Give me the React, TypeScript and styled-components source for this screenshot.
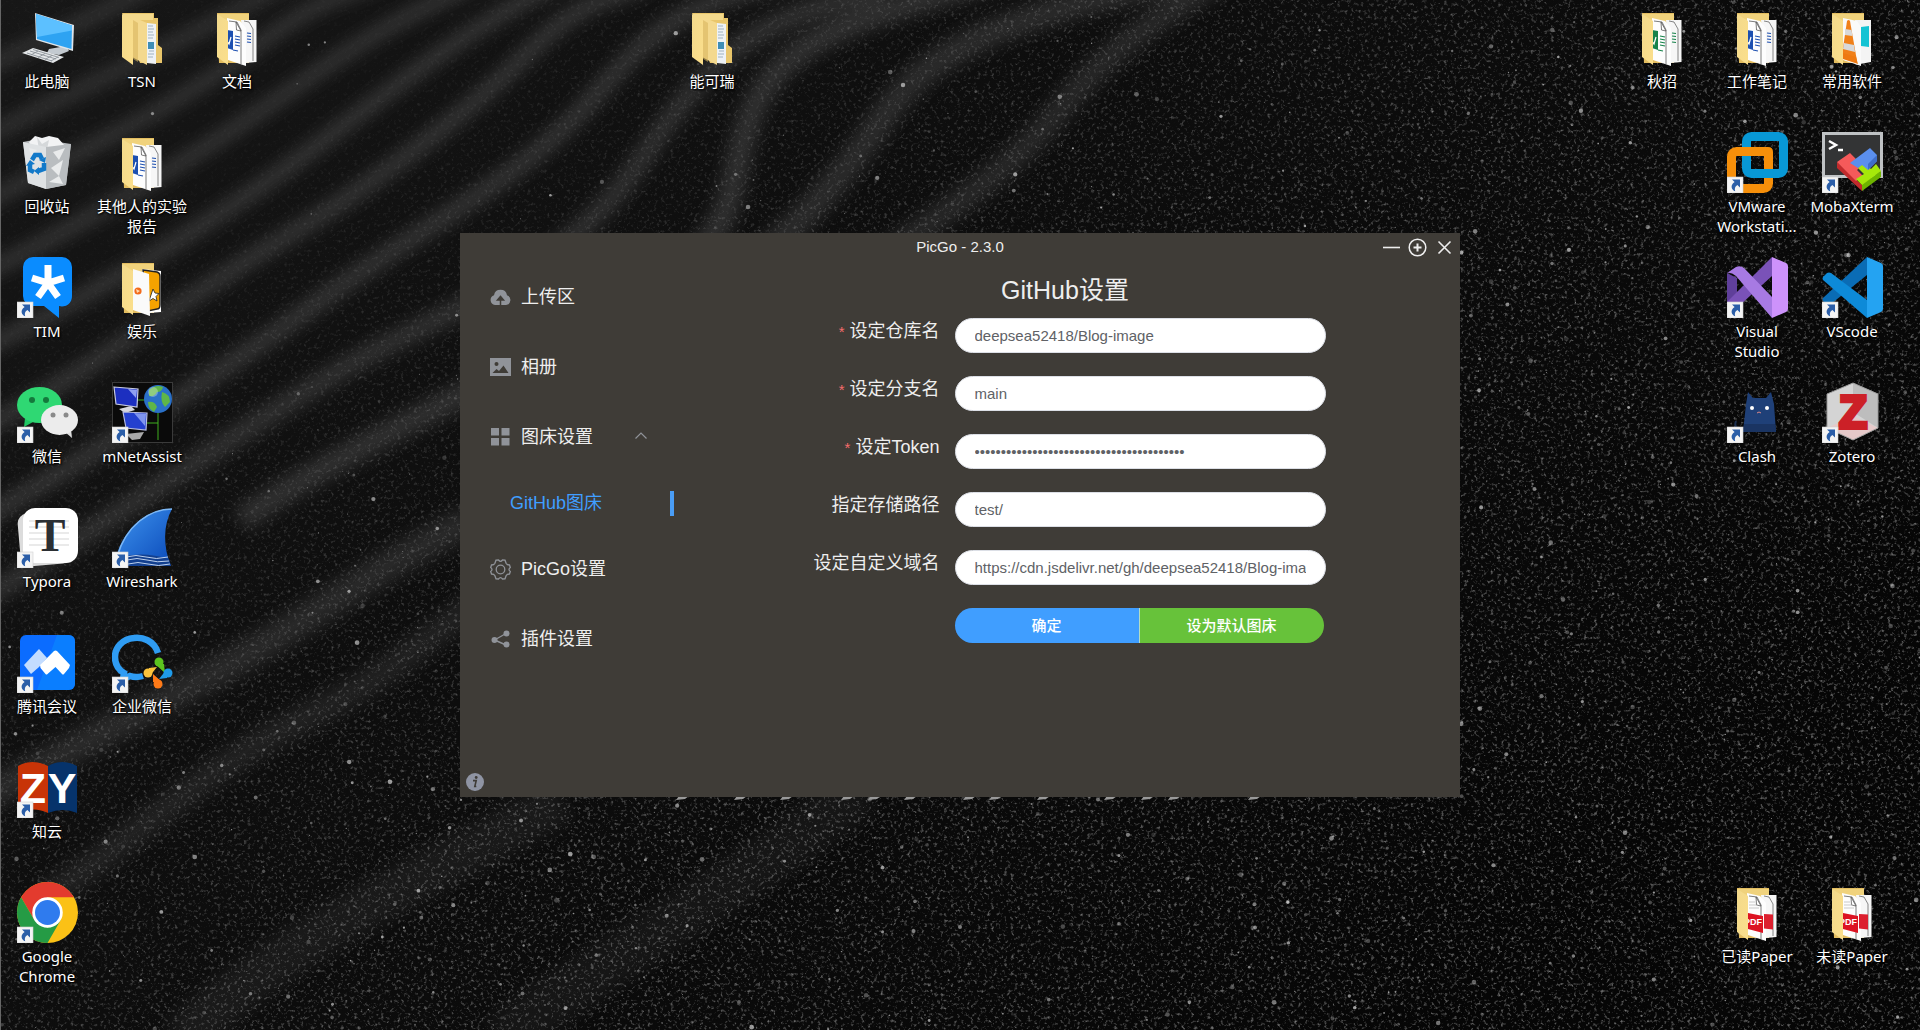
import React from 'react';
import styled, { createGlobalStyle } from 'styled-components';

const GlobalStyle = createGlobalStyle`
  *, *::before, *::after { box-sizing: border-box; }
  html, body { margin: 0; background: #0a0a0a; }
  body { overflow: hidden; }
  button, input { font: inherit; color: inherit; margin: 0; }
`;

const uiFont = '"Liberation Sans", "Noto Sans CJK SC", sans-serif';
const deskFont = '"Noto Sans", "Noto Sans CJK SC", sans-serif';

/* ---------- Desktop ---------- */

const Desktop = styled.main`
  position: relative;
  min-height: 100vh;
  overflow: hidden;
  background: #0a0a0a;
  box-shadow: inset 1px 0 0 #666;
`;

const WallpaperSvg = styled.svg`
  position: absolute;
  inset: 0 0 0 1px;
  width: 100%;
  height: 100%;
`;

const IconGrid = styled.div`
  position: relative;
  display: grid;
  grid-template-columns: repeat(auto-fill, 95px);
  grid-auto-rows: 125px;
`;

const Shortcut = styled.button<{ $col: number; $row: number }>`
  grid-column: ${(p) => p.$col};
  grid-row: ${(p) => p.$row};
  display: flex;
  flex-direction: column;
  align-items: center;
  gap: 3px;
  padding: 7px 1px 0 0;
  border: 0;
  background: none;
  font-family: ${deskFont};
`;

const IconSvg = styled.svg`
  display: block;
  flex: none;
  width: 61px;
  height: 61px;
`;

const ShortcutLabel = styled.span`
  width: 92px;
  display: flex;
  flex-direction: column;
  align-items: center;
  white-space: nowrap;
  font-size: 15px;
  line-height: 20px;
  color: #fff;
  text-shadow: 1px 1px 2px #000, 0 1px 3px #000;
`;

/* ---------- Application window ---------- */

const AppWindow = styled.section`
  position: absolute;
  top: 233px;
  left: 50%;
  width: min(1000px, 100%);
  min-height: 564px;
  transform: translateX(-50%);
  display: flex;
  flex-direction: column;
  background: #3f3c37;
  color: #eee;
  font-family: ${uiFont};
`;

const TitleBar = styled.header`
  display: grid;
  grid-template-columns: 1fr auto 1fr;
  align-items: center;
  height: 28px;
  padding: 0 6px;
  font-size: 15px;
  line-height: 20px;
`;

const TitleText = styled.h1`
  grid-column: 2;
  margin: 0;
  font-size: 15px;
  font-weight: 400;
`;

const WindowControls = styled.div`
  display: flex;
  justify-content: flex-end;
  gap: 8px;
`;

const ControlButton = styled.button`
  display: flex;
  padding: 0;
  border: 0;
  background: none;
`;

const Body = styled.div`
  flex: 1;
  display: flex;
`;

const Sidebar = styled.nav`
  width: 214px;
  padding-top: 1px;
  display: flex;
  flex-direction: column;
`;

const MenuItem = styled.a`
  display: flex;
  align-items: center;
  gap: 10px;
  height: 70px;
  padding-left: 30px;
  padding-right: 27px;
  color: #eee;
  font-size: 18px;
  line-height: 24px;
  text-decoration: none;
`;

const MenuText = styled.span`
  flex: 1;
`;

const SubMenuItem = styled.a`
  display: flex;
  align-items: center;
  justify-content: space-between;
  height: 62px;
  padding-left: 50px;
  color: #409eff;
  font-size: 18px;
  line-height: 24px;
  text-decoration: none;

  &::after {
    content: '';
    width: 4px;
    height: 25px;
    background: #4a9df5;
  }
`;

const InfoButton = styled.button`
  display: flex;
  align-self: flex-start;
  margin: auto 0 6px 6px;
  padding: 0;
  border: 0;
  background: none;
`;

const Content = styled.div`
  flex: 1;
  display: flex;
  flex-direction: column;
  align-items: center;
  gap: 11px;
  padding: 13px 4px 0 0;
`;

const Heading = styled.h2`
  margin: 0;
  font-size: 25px;
  line-height: 33px;
  font-weight: 400;
`;

const Form = styled.form`
  width: min(521px, 100%);
  display: flex;
  flex-direction: column;
  gap: 23px;
`;

const Field = styled.div`
  display: grid;
  grid-template-columns: 150px 1fr;
  align-items: start;
`;

const FieldLabel = styled.label<{ $required?: boolean }>`
  padding-right: 15px;
  text-align: right;
  white-space: nowrap;
  font-size: 18px;
  line-height: 26px;

  &::before {
    content: ${(p) => (p.$required ? "'*'" : 'none')};
    margin-right: 5px;
    color: #f56c6c;
    font-size: 15px;
  }
`;

const TextInput = styled.input`
  width: 100%;
  height: 35px;
  padding: 0 19px;
  border: 1px solid #dcdfe6;
  border-radius: 18px;
  background: #fff;
  color: #606266;
  font-size: 15px;
  outline: none;
`;

const Actions = styled.div`
  grid-column: 2;
  display: flex;
  padding-right: 2px;
`;

const ActionButton = styled.button<{ $tone: string }>`
  flex: 1;
  height: 35px;
  padding: 0;
  border: 0;
  background: ${(p) => p.$tone};
  color: #fff;
  font-size: 15px;
  font-weight: 500;
  line-height: 20px;

  &:first-child {
    border-radius: 18px 0 0 18px;
    border-right: 1px solid #b3dcc4;
  }
  &:last-child {
    border-radius: 0 18px 18px 0;
  }
`;

/* ---------- Wallpaper ---------- */

const ridges: [string, number, number][] = [
  ['M-20 70 C60 30 110 10 160 -20', 14, 0.5],
  ['M-20 140 C60 95 150 60 290 -20', 14, 0.5],
  ['M-20 205 C80 150 170 110 250 50 S340 0 380 -20', 14, 0.55],
  ['M-20 275 C80 225 190 160 290 90 S420 10 480 -20', 15, 0.55],
  ['M-20 350 C100 290 210 225 310 150 S450 40 560 -20', 16, 0.55],
  ['M-20 430 C90 370 180 300 280 240 S470 110 530 50 S620 0 650 -20', 17, 0.55],
  ['M-20 520 C100 450 210 380 320 300 S520 180 590 100 S680 10 780 -20', 18, 0.55],
  ['M-20 600 C110 520 240 430 340 370 S560 280 640 160 S760 20 880 -10', 20, 0.5],
  ['M240 520 C340 450 460 400 600 320 S720 220 745 130 S850 20 990 -20', 24, 0.5],
  ['M700 300 C780 250 840 180 880 120 S980 20 1180 -20', 26, 0.45],
  ['M820 300 C930 220 1000 180 1050 120 S1120 40 1220 -20', 24, 0.4],
  ['M-20 800 C80 740 190 690 270 640 S390 560 470 520', 30, 0.4],
  ['M40 900 C120 850 200 770 300 720 S420 640 480 600', 26, 0.3],
  ['M180 1040 C280 940 420 880 560 800', 44, 0.2],
  ['M500 1040 C600 960 720 900 860 790', 50, 0.16],
];

const makeSpecks = (count: number) => {
  let seed = 20231;
  const next = () => {
    seed = (seed * 16807) % 2147483647;
    return seed / 2147483647;
  };
  const out: { x: number; y: number; r: number; o: number }[] = [];
  while (out.length < count) {
    const x = next() * 1920;
    const y = next() * 1030;
    const density = Math.min(1, Math.max(0.03, (x + y * 1.3 - 650) / 1100));
    if (next() < density) {
      out.push({ x, y, r: 0.5 + Math.pow(next(), 4) * 1.9, o: 0.15 + next() * 0.55 });
    }
  }
  return out;
};

const specks = makeSpecks(2800);

const strokesUnderWindow = [680, 738, 784, 845, 872, 908, 967, 993, 1041, 1108, 1145, 1172, 1252];

const Wallpaper = () => (
  <WallpaperSvg viewBox="0 0 1920 1030" preserveAspectRatio="xMidYMid slice" aria-hidden="true">
    <defs>
      <linearGradient id="base" x1="0" y1="0" x2="1" y2="0.6">
        <stop offset="0" stopColor="#171717" />
        <stop offset="0.4" stopColor="#0e0e0e" />
        <stop offset="1" stopColor="#060606" />
      </linearGradient>
      <linearGradient id="grainFade" x1="0" y1="0" x2="1" y2="0.7">
        <stop offset="0.15" stopColor="#fff" stopOpacity="0.06" />
        <stop offset="0.6" stopColor="#fff" stopOpacity="0.6" />
        <stop offset="1" stopColor="#fff" stopOpacity="0.7" />
      </linearGradient>
      <mask id="grainMask">
        <rect width="1920" height="1030" fill="url(#grainFade)" />
      </mask>
      <filter id="soft" x="-20%" y="-20%" width="140%" height="140%">
        <feGaussianBlur stdDeviation="8" />
      </filter>
      <filter id="grain" x="0" y="0" width="100%" height="100%">
        <feTurbulence type="fractalNoise" baseFrequency="0.3" numOctaves="3" seed="7" />
        <feColorMatrix values="0 0 0 0 0.7  0 0 0 0 0.7  0 0 0 0 0.7  2.2 0 0 0 -1.2" />
      </filter>
    </defs>
    <rect width="1920" height="1030" fill="url(#base)" />
    <g fill="none" stroke="#505050" filter="url(#soft)">
      {ridges.map(([d, w, o]) => (
        <path key={d} d={d} strokeWidth={w} strokeOpacity={o} />
      ))}
    </g>
    <rect width="1920" height="1030" filter="url(#grain)" mask="url(#grainMask)" />
    <g fill="#ddd">
      {specks.map((s, i) => (
        <circle key={i} cx={s.x} cy={s.y} r={s.r} opacity={s.o} />
      ))}
    </g>
    <g fill="#999">
      {strokesUnderWindow.map((x) => (
        <path key={x} d={`M${x - 5} 800 l3 -4 h10 l-4 3 z`} />
      ))}
    </g>
  </WallpaperSvg>
);

/* ---------- Desktop icons ---------- */

const ArrowBadge = () => (
  <g>
    <rect x="0" y="45" width="16" height="16" fill="#f4f4f4" stroke="#cfcfcf" strokeWidth="0.6" />
    <path d="M5 47.5h8v8l-2.6-2.6c-2.6 1.6-3 3.6-2.2 6.3-3.6-1.4-5.6-5.8-.6-9.3z" fill="#2b5ea8" />
  </g>
);

const FolderBack = () => (
  <>
    <path d="M10 6h32v50H12z" fill="#e3bd60" />
    <path d="M11 7h31v10H11z" fill="#f0d27c" />
  </>
);

const FolderFlap = () => <path d="M10 7l11 7v44l-11-8z" fill="url(#flap)" />;

const Pages = () => (
  <>
    <path d="M34 13h15.500v42l-11 1z" fill="#f6f6f6" />
    <path d="M37 14l5 1 4 7v32" fill="none" stroke="#555" strokeWidth="0.7" />
    <path d="M20 11l13 3 6 7v38l-18-6z" fill="#fdfdfd" />
    <path d="M22 14l8 1 4 8v34" fill="none" stroke="#444" strokeWidth="0.7" />
    <path d="M29 15l0.500 8 4.500 1z" fill="#fff" stroke="#444" strokeWidth="0.7" />
  </>
);

const FolderStack = () => (
  <>
    <path d="M10 6h32v5h4v27l4 3v15H28z" fill="#e9c66b" />
    <path d="M11 7h30v6H11z" fill="#f3d98c" />
    <path d="M35 16l9 1v40l-9-1z" fill="#eef2f5" />
    <path d="M36 19h5M36 22h6M36 25h5M36 28h6M36 31h5M37 44h5M36 47h6M36 50h5" stroke="#9fb2c0" strokeWidth="1" />
    <path d="M36 35h6v7h-6z" fill="#3f8db5" />
    <path d="M19 9l16 7v42L20 50z" fill="#f4d98e" />
    <path d="M21 13l5 3v39l-5-3z" fill="#d9b65d" opacity="0.6" />
    <FolderFlap />
  </>
);

const FolderDocs = ({ tone }: { tone: string }) => (
  <>
    <FolderBack />
    <Pages />
    <path d="M20 23l6 1v19l-6-2z" fill={tone} />
    <path d="M20 34l2 3 2-7" fill="none" stroke="#fff" strokeWidth="1.200" />
    <path d="M28 29l5 1M28 32l5 1M28 35l5 1M28 38l5 1M26 43l5 1M40 26l4 .5M40 29l4 .5M40 32l4 .5M40 35l4 .5" stroke={tone} strokeWidth="1.2" />
    <FolderFlap />
  </>
);

const FolderMedia = () => (
  <>
    <FolderBack />
    <path d="M30 12l19 2v41l-12 1z" fill="#fff" />
    <path d="M31 13l14 2q3 1 3 4v29q0 4-3 4l-9 2z" fill="#f5a300" stroke="#222" strokeWidth="1.4" />
    <path d="M41 32l2 4 4 .5-3 3 1 4.500-4-2.500-4 2.500z" fill="#fff" stroke="#222" strokeWidth="0.8" />
    <path d="M21 12l16 5 1 42-17-6z" fill="#fafafa" />
    <circle cx="26" cy="34" r="3.600" fill="#f26a1b" />
    <path d="M24 32l4 2-3 2z" fill="#ffd9b0" />
    <FolderFlap />
  </>
);

const FolderCone = () => (
  <>
    <FolderBack />
    <path d="M33 13h16v42l-11 2z" fill="#f4f4f4" />
    <path d="M39 20l8-1v21l-8-1z" fill="#14c3d3" />
    <path d="M21 11l14 3 4 6v39l-18-6z" fill="#fafafa" />
    <path d="M25 14q1.500-2 3 0l7 40-14-3v-10z" fill="#f08019" />
    <path d="M23 22l6.500 1 1 6-7.500-1zM22 36l10 2 1 7-12-3z" fill="#d9d9d9" />
    <path d="M21 46l13 4 2 7-15-5z" fill="#ee7a12" />
    <FolderFlap />
  </>
);

const FolderPdf = () => (
  <>
    <FolderBack />
    <Pages />
    <path d="M37 32l9 .5v15l-9-1z" fill="#dc1f2e" />
    <path d="M21 31l15 3v17l-15-4z" fill="#dc1322" />
    <text x="17" y="43" fontSize="9" fontWeight="700" fontFamily="Liberation Sans, sans-serif" fill="#fff">PDF</text>
    <path d="M22 20h6M22 23h9M22 26h10" stroke="#bbb" strokeWidth="0.8" />
    <FolderFlap />
  </>
);

const Computer = () => (
  <>
    <path d="M32 42l17-3 3 5-10 4-12-2z" fill="#c3cad0" />
    <path d="M18 6l39 12-1 26-37-11z" fill="#dfe5ea" />
    <path d="M19 7l36 11.500-.5 23.500L20 32z" fill="#2ea3f2" />
    <path d="M19 7l36 11.500v5L20 30z" fill="#5cc0ff" />
    <path d="M5 46l11-5 31 9-11 6z" fill="#e3e6e8" />
    <path d="M10 46l25 8M13 44l26 8M16 42.500l26 8M14 48l7-4M21 50.500l7-4M28 52.500l7-4M34 54l7-4" stroke="#8b9298" strokeWidth="0.9" />
  </>
);

const RecycleBin = () => (
  <>
    <path d="M6 10l16-3 32 5-5 41-20 4-18-6z" fill="#c9cdd0" opacity="0.9" />
    <path d="M12 10l6-6 7 2 7-2 9 2 7 8-6 7H16z" fill="#f2f3f4" />
    <path d="M20 5l5 7 7-4-2 9-8 1z" fill="#d5d8da" />
    <path d="M6 10l23 5v42l-18-6z" fill="#dfe2e4" />
    <path d="M29 15l25-3-5 41-20 4z" fill="#b9bdc0" />
    <path d="M36 20l12-4-6 12zM34 36l12-8-4 16zM32 50l10-6 4 8zM12 16l8 2-6 6z" fill="#e9ebec" />
    <g fill="none" stroke="#1279c9" strokeWidth="4.500">
      <path d="M15 28l3-5h5l2 4" />
      <path d="M27 31l0 6-6 2" />
      <path d="M17 40l-4-2 0-6" />
    </g>
    <path d="M22 28l7-3-1 6zM22 35v8l-5-4zM9 34l4-6 5 4z" fill="#1279c9" />
  </>
);

const Tim = () => (
  <>
    <path d="M16 0h29a10 10 0 0 1 10 10v29a10 10 0 0 1-13 10v12L27 49H16A10 10 0 0 1 6 39V10A10 10 0 0 1 16 0z" fill="#0a8cff" />
    <g stroke="#fff" strokeWidth="7">
      <path d="M31 26V8M31 26l-16-5M31 26l16-5M31 26L21 40M31 26l10 14" />
    </g>
  </>
);

const WeChat = () => (
  <>
    <path d="M8 36l-1 9 9-5z" fill="#1fc763" />
    <ellipse cx="22.500" cy="23" rx="22.500" ry="18" fill="#2fd873" />
    <circle cx="15" cy="18" r="3" fill="#14793c" />
    <circle cx="29" cy="18" r="3" fill="#14793c" />
    <path d="M48 50l7 6-1-9z" fill="#dedede" />
    <ellipse cx="42.500" cy="38" rx="18.500" ry="15" fill="#ececec" />
    <circle cx="36" cy="33" r="2.500" fill="#8a8a8a" />
    <circle cx="49" cy="33" r="2.500" fill="#8a8a8a" />
  </>
);

const NetAssist = () => (
  <>
    <rect x="0.500" y="0.500" width="60" height="60" fill="#0a0a0a" stroke="#3a3a3a" />
    <path d="M26 18h8M46 31v27M34 41h12" stroke="#3fae1f" strokeWidth="1" />
    <path d="M7 27l12-3 4 4-10 3z" fill="#d7d7dd" />
    <path d="M2 5l24 2-1 18L4 22z" fill="#1c2fc0" stroke="#c8cbe0" strokeWidth="1.200" />
    <path d="M16 7l9 1-1 8z" fill="#8fa0f2" />
    <path d="M14 52l18-2-4 7-8 1z" fill="#aaa" />
    <path d="M11 30l24 1-1 17-20-2z" fill="#2440cf" stroke="#b8bde0" strokeWidth="1.200" />
    <path d="M22 31l12 1-1 12z" fill="#7f95ee" />
    <circle cx="46" cy="17" r="14" fill="#2a70c8" />
    <path d="M37 8q7-6 14-3-1 5-6 5-2 5-8 4zM50 10q8 2 8 10l-5 5q-5-5-3-15zM36 20q7-1 9 5l-3 5q-6-3-6-10z" fill="#5fb648" />
    <circle cx="41" cy="10" r="5" fill="#fff" opacity="0.3" />
  </>
);

const Typora = () => (
  <>
    <rect x="2" y="5" width="52" height="53" rx="10" fill="#dcdcdc" transform="rotate(-5 28 31)" />
    <rect x="6" y="1" width="55" height="55" rx="12" fill="#fff" />
    <path d="M12 14h40M12 20h40M12 26h40M12 32h40M12 38h40" stroke="#e3e3e3" strokeWidth="1.500" />
    <text x="33" y="44" textAnchor="middle" fontSize="46" fontWeight="700" fontFamily="Liberation Serif, serif" fill="#2b2f33">T</text>
  </>
);

const Wireshark = () => (
  <>
    <path d="M60 2C40 1 12 16 3 54l56 5C51 40 51 18 60 2z" fill="url(#fin)" />
    <path d="M60 2C38 2 14 18 5 50l-1 3" fill="none" stroke="#7db8f5" strokeWidth="1.500" />
    <path d="M8 50q24-6 49 2l2 7H16z" fill="#13408f" />
    <path d="M14 50q10-3 20 0t22 0M15 53q10-3 20 0t22 1M16 57q10-3 20 0t22 0" fill="none" stroke="#cfe0f7" strokeWidth="0.900" />
  </>
);

const Meeting = () => (
  <>
    <rect x="3" y="3" width="55" height="55" rx="6" fill="#0b6cff" />
    <path d="M40 3h12a6 6 0 0 1 6 6v43a6 6 0 0 1-6 6H20z" fill="#0a8bff" opacity="0.6" />
    <path d="M7 33L22 17l8 9-8 9-8 7z" fill="#c3dcff" />
    <path d="M23 33L37 19q1.500-1 3 0l13 14-1 3-5 6q-1 1-2 0l-6.500-7-8 7q-1 1-2 0l-5-6z" fill="#fff" />
  </>
);

const WeCom = () => (
  <>
    <path d="M46 21C42 8 30 5 22 6 10 7 3 16 3 25c0 8 4 13 9 16l-1 6 7-3q6 2 13 0" fill="none" stroke="#2f9cf3" strokeWidth="6.500" />
    <circle cx="47" cy="30" r="4.500" fill="#5cc41f" />
    <path d="M43 32l9 0 1 9z" fill="#5cc41f" />
    <circle cx="56" cy="41" r="4.500" fill="#1f9bea" />
    <path d="M55 37v9l-8 1z" fill="#1f9bea" />
    <circle cx="46" cy="52" r="4.500" fill="#ff7a17" />
    <path d="M50 50h-9l0-8z" fill="#ff7a17" />
    <circle cx="36" cy="41" r="4.500" fill="#fbc33c" />
    <path d="M37 45v-9l8-1z" fill="#fbc33c" />
  </>
);

const ZhiYun = () => (
  <>
    <path d="M1 9q14-8 30 0v47q-14-7-30 0z" fill="#c83407" />
    <path d="M31 9q14-8 29 0v47q-14-6-29 0z" fill="#06336b" />
    <g fontSize="43" fontWeight="700" fontFamily="Liberation Sans, sans-serif" fill="#fff" textAnchor="middle">
      <text x="16" y="46">Z</text>
      <text x="45" y="46">Y</text>
    </g>
  </>
);

const Chrome = () => (
  <>
    <circle cx="30.500" cy="30.500" r="30.500" fill="#fbc116" />
    <path d="M4.100 15.250A30.500 30.500 0 0 1 56.900 15.250H30.500L17.300 38.100z" fill="#e33b2e" />
    <path d="M4.100 15.250A30.500 30.500 0 0 0 30.500 61L43.700 38.100 30.500 45.800 17.300 38.100z" fill="#259b45" />
    <circle cx="30.500" cy="30.500" r="15.250" fill="#fff" />
    <circle cx="30.500" cy="30.500" r="12.500" fill="#2f7bee" />
  </>
);

const VMware = () => (
  <>
    <rect x="4.500" y="19.500" width="37" height="37" rx="5" fill="none" stroke="#f68f0a" strokeWidth="9" />
    <rect x="19.500" y="4.500" width="37" height="37" rx="5" fill="none" stroke="#0898d6" strokeWidth="9" />
    <path d="M10 15h31q5 0 5 5v12h-9v-8H10z" fill="#f68f0a" />
  </>
);

const MobaXterm = () => (
  <>
    <rect x="1.500" y="1.500" width="58" height="43" fill="#333435" stroke="#bfc2c4" strokeWidth="3" />
    <path d="M7 9l7 4-7 4" fill="none" stroke="#fff" strokeWidth="2.500" />
    <path d="M16 18h5" stroke="#fff" strokeWidth="2.500" />
    <path d="M15 30v6l25 23v-6z" fill="#c22a2c" />
    <path d="M40 52v7l19-14v-6z" fill="#6fb400" />
    <path d="M15 30l13-9 12 12-5 5 6 6-7 5z" fill="#f55a5a" />
    <path d="M34 47l8-5-6-6 6-5 7 6 5-5 5 7-19 14z" fill="#a6e80a" />
    <path d="M28 31l20-15 7 7v6l-9 9-6-5-4 3z" fill="#5b8fee" />
    <path d="M55 23v6l-9 9v-6z" fill="#3f6ec9" />
  </>
);

const VisualStudio = () => (
  <>
    <path d="M0 16l10 5v20L0 45z" fill="#5f3f9a" />
    <path d="M0 45L45 0v19L13 48q-7 5-13-3z" fill="#7a52b8" />
    <path d="M0 16l9-6q4-2 8 1l28 29v21L9 19q-5-4-9-3z" fill="#a77ae3" />
    <path d="M45 0l14 6q2 1 2 3v43q0 2-2 3l-14 6z" fill="#cd92fb" />
  </>
);

const VsCode = () => (
  <>
    <path d="M1 41L45 0v18L9 47q-2 1-4 0l-4-3q-1-1 0-3z" fill="#0a6cb5" />
    <path d="M1 20l4-4q2-1 4 0l36 27v18L1 23q-1-1 0-3z" fill="#0d8ad8" />
    <path d="M45 0l14 6q2 1 2 3v43q0 2-2 3l-14 6z" fill="#24a3f2" />
  </>
);

const Clash = () => (
  <>
    <path d="M15 47q-9 0-6-8" fill="none" stroke="#1d3050" strokeWidth="2" />
    <path d="M21 10l5 6h13l5-6 3 12 2 28H16l3-28z" fill="#1f4078" />
    <path d="M17 42l-1 8h33l-1-8z" fill="#1a3462" />
    <circle cx="25" cy="26" r="2" fill="#fff" />
    <circle cx="40" cy="26" r="2" fill="#fff" />
    <path d="M30 31l2-1 2 1" fill="none" stroke="#d88" strokeWidth="1" />
  </>
);

const Zotero = () => (
  <>
    <path d="M31 1l25 11v34L31 58 5 46V12z" fill="#d4d4d4" />
    <path d="M31 1l25 11v34L31 30z" fill="#bdbdbd" />
    <path d="M5 46l26-12 25 12-25 12z" fill="#e6c9c9" />
    <path d="M31 1l25 11v34L31 58 5 46V12z" fill="none" stroke="#9b9b9b" />
    <text x="31" y="46" textAnchor="middle" fontSize="46" fontWeight="700" fontFamily="Liberation Sans, sans-serif" fill="#cc2027" stroke="#cc2027" strokeWidth="4">Z</text>
  </>
);

interface DesktopItem {
  col: number;
  row: number;
  label: string[];
  icon: React.ReactNode;
  linked?: boolean;
}

const items: DesktopItem[] = [
  { col: 1, row: 1, label: ['此电脑'], icon: <Computer /> },
  { col: 2, row: 1, label: ['TSN'], icon: <FolderStack /> },
  { col: 3, row: 1, label: ['文档'], icon: <FolderDocs tone="#1c4fb0" /> },
  { col: 8, row: 1, label: ['能可瑞'], icon: <FolderStack /> },
  { col: 18, row: 1, label: ['秋招'], icon: <FolderDocs tone="#16824a" /> },
  { col: 19, row: 1, label: ['工作笔记'], icon: <FolderDocs tone="#1c4fb0" /> },
  { col: 20, row: 1, label: ['常用软件'], icon: <FolderCone /> },
  { col: 1, row: 2, label: ['回收站'], icon: <RecycleBin /> },
  { col: 2, row: 2, label: ['其他人的实验', '报告'], icon: <FolderDocs tone="#1c4fb0" /> },
  { col: 19, row: 2, label: ['VMware', 'Workstati...'], icon: <VMware />, linked: true },
  { col: 20, row: 2, label: ['MobaXterm'], icon: <MobaXterm />, linked: true },
  { col: 1, row: 3, label: ['TIM'], icon: <Tim />, linked: true },
  { col: 2, row: 3, label: ['娱乐'], icon: <FolderMedia /> },
  { col: 19, row: 3, label: ['Visual', 'Studio'], icon: <VisualStudio />, linked: true },
  { col: 20, row: 3, label: ['VScode'], icon: <VsCode />, linked: true },
  { col: 1, row: 4, label: ['微信'], icon: <WeChat />, linked: true },
  { col: 2, row: 4, label: ['mNetAssist'], icon: <NetAssist />, linked: true },
  { col: 19, row: 4, label: ['Clash'], icon: <Clash />, linked: true },
  { col: 20, row: 4, label: ['Zotero'], icon: <Zotero />, linked: true },
  { col: 1, row: 5, label: ['Typora'], icon: <Typora />, linked: true },
  { col: 2, row: 5, label: ['Wireshark'], icon: <Wireshark />, linked: true },
  { col: 1, row: 6, label: ['腾讯会议'], icon: <Meeting />, linked: true },
  { col: 2, row: 6, label: ['企业微信'], icon: <WeCom />, linked: true },
  { col: 1, row: 7, label: ['知云'], icon: <ZhiYun />, linked: true },
  { col: 1, row: 8, label: ['Google', 'Chrome'], icon: <Chrome />, linked: true },
  { col: 19, row: 8, label: ['已读Paper'], icon: <FolderPdf /> },
  { col: 20, row: 8, label: ['未读Paper'], icon: <FolderPdf /> },
];

const SharedGradients = () => (
  <defs>
    <linearGradient id="flap" x1="0" y1="0" x2="1" y2="1">
      <stop offset="0" stopColor="#f3d98b" />
      <stop offset="1" stopColor="#fbdf8c" />
    </linearGradient>
    <linearGradient id="fin" x1="0" y1="0" x2="1" y2="1">
      <stop offset="0" stopColor="#3f95f0" />
      <stop offset="1" stopColor="#0a49b8" />
    </linearGradient>
  </defs>
);

/* ---------- Menu icons ---------- */

const menuGrey = '#909399';

const CloudIcon = () => (
  <svg width="21" height="18" viewBox="0 0 21 18">
    <path d="M5 17a5 5 0 0 1-1-9.700 6.600 6.600 0 0 1 13 0A5 5 0 0 1 16 17z" fill={menuGrey} />
    <path d="M10.500 17v-6M7.500 12l3-3.500 3 3.500z" stroke="#3f3c37" strokeWidth="1.500" fill="#3f3c37" />
  </svg>
);

const PictureIcon = () => (
  <svg width="21" height="18" viewBox="0 0 21 18">
    <rect width="21" height="18" fill={menuGrey} />
    <circle cx="6.500" cy="6" r="2" fill="#3f3c37" />
    <path d="M2.500 15l4-4 2.500 2 4.500-5.500 5 7.500z" fill="#3f3c37" />
  </svg>
);

const TilesIcon = () => (
  <svg width="21" height="18" viewBox="0 0 21 18">
    <path d="M1 0h8v7.500H1zM11.500 0h8v7.500h-8zM1 10h8v7.500H1zM11.500 10h8v7.500h-8z" fill={menuGrey} />
  </svg>
);

const GearIcon = () => (
  <svg width="21" height="21" viewBox="0 0 21 21" fill="none" stroke={menuGrey} strokeWidth="1.300">
    <path d="M6 1.200L8.500 1q2 2.600 4 0l2.500.2 1.200 3.300q.8 1.500 3.300 1.500l.8 2.500q-2.600 2 0 4l-.8 2.500q-2.500 0-3.300 1.500L15 19.800l-2.500.2q-2-2.600-4 0L6 19.800l-1.200-3.300Q4 15 1.500 15L.7 12.500q2.600-2 0-4L1.500 6Q4 6 4.800 4.500z" />
    <circle cx="10.500" cy="10.500" r="4.300" />
  </svg>
);

const ShareIcon = () => (
  <svg width="21" height="18" viewBox="0 0 21 18" fill={menuGrey}>
    <path d="M4.500 10L16 3.500M4.500 10L16 15" stroke={menuGrey} strokeWidth="1.400" />
    <circle cx="4.500" cy="10" r="3" />
    <circle cx="16.500" cy="3.500" r="3" />
    <circle cx="16.500" cy="14.500" r="3" />
  </svg>
);

const ChevronUp = () => (
  <svg width="12" height="12" viewBox="0 0 12 12" fill="none" stroke={menuGrey} strokeWidth="1.200">
    <path d="M0.500 7.500L6 2l5.500 5.500" />
  </svg>
);

/* ---------- Page ---------- */

const fields = [
  { id: 'repo', label: '设定仓库名', required: true, type: 'text', value: 'deepsea52418/Blog-image' },
  { id: 'branch', label: '设定分支名', required: true, type: 'text', value: 'main' },
  { id: 'token', label: '设定Token', required: true, type: 'password', value: 'x'.repeat(40) },
  { id: 'path', label: '指定存储路径', required: false, type: 'text', value: 'test/' },
  { id: 'domain', label: '设定自定义域名', required: false, type: 'text', value: 'https://cdn.jsdelivr.net/gh/deepsea52418/Blog-ima' },
];

export default function App() {
  return (
    <Desktop>
      <GlobalStyle />
      <Wallpaper />
      <IconGrid>
        {items.map((item) => (
          <Shortcut key={item.label.join('')} type="button" $col={item.col} $row={item.row}>
            <IconSvg viewBox="0 0 61 61" aria-hidden="true">
              <SharedGradients />
              {item.icon}
              {item.linked && <ArrowBadge />}
            </IconSvg>
            <ShortcutLabel>
              {item.label.map((line) => (
                <span key={line}>{line}</span>
              ))}
            </ShortcutLabel>
          </Shortcut>
        ))}
      </IconGrid>

      <AppWindow>
        <TitleBar>
          <TitleText>PicGo - 2.3.0</TitleText>
          <WindowControls>
            <ControlButton type="button" aria-label="最小化">
              <svg width="19" height="19" viewBox="0 0 19 19" stroke="#eee" strokeWidth="1.600">
                <path d="M2 9.500h17" />
              </svg>
            </ControlButton>
            <ControlButton type="button" aria-label="迷你窗口">
              <svg width="19" height="19" viewBox="0 0 19 19" fill="none" stroke="#eee" strokeWidth="1.500">
                <circle cx="9.500" cy="9.500" r="8.300" />
                <path d="M5.500 9.500h8M9.500 5.500v8" strokeWidth="2" />
              </svg>
            </ControlButton>
            <ControlButton type="button" aria-label="关闭">
              <svg width="19" height="19" viewBox="0 0 19 19" stroke="#eee" strokeWidth="1.600">
                <path d="M3.500 3.500l12 12M15.500 3.500l-12 12" />
              </svg>
            </ControlButton>
          </WindowControls>
        </TitleBar>
        <Body>
          <Sidebar>
            <MenuItem href="#upload"><CloudIcon /><MenuText>上传区</MenuText></MenuItem>
            <MenuItem href="#gallery"><PictureIcon /><MenuText>相册</MenuText></MenuItem>
            <MenuItem href="#hosts"><TilesIcon /><MenuText>图床设置</MenuText><ChevronUp /></MenuItem>
            <SubMenuItem href="#github">GitHub图床</SubMenuItem>
            <MenuItem href="#settings"><GearIcon /><MenuText>PicGo设置</MenuText></MenuItem>
            <MenuItem href="#plugins"><ShareIcon /><MenuText>插件设置</MenuText></MenuItem>
            <InfoButton type="button" aria-label="关于">
              <svg width="18" height="18" viewBox="0 0 18 18">
                <circle cx="9" cy="9" r="9" fill="#8f94a3" />
                <circle cx="10.200" cy="4.500" r="1.400" fill="#3f3c37" />
                <path d="M7 7.600h3.200L8.800 13.500h1.500" fill="none" stroke="#3f3c37" strokeWidth="1.600" />
              </svg>
            </InfoButton>
          </Sidebar>
          <Content>
            <Heading>GitHub设置</Heading>
            <Form onSubmit={(e) => e.preventDefault()}>
              {fields.map((f) => (
                <Field key={f.id}>
                  <FieldLabel htmlFor={f.id} $required={f.required}>{f.label}</FieldLabel>
                  <TextInput id={f.id} type={f.type} defaultValue={f.value} autoComplete="off" spellCheck={false} />
                </Field>
              ))}
              <Field>
                <Actions>
                  <ActionButton type="submit" $tone="#409eff">确定</ActionButton>
                  <ActionButton type="button" $tone="#67c23a">设为默认图床</ActionButton>
                </Actions>
              </Field>
            </Form>
          </Content>
        </Body>
      </AppWindow>
    </Desktop>
  );
}
